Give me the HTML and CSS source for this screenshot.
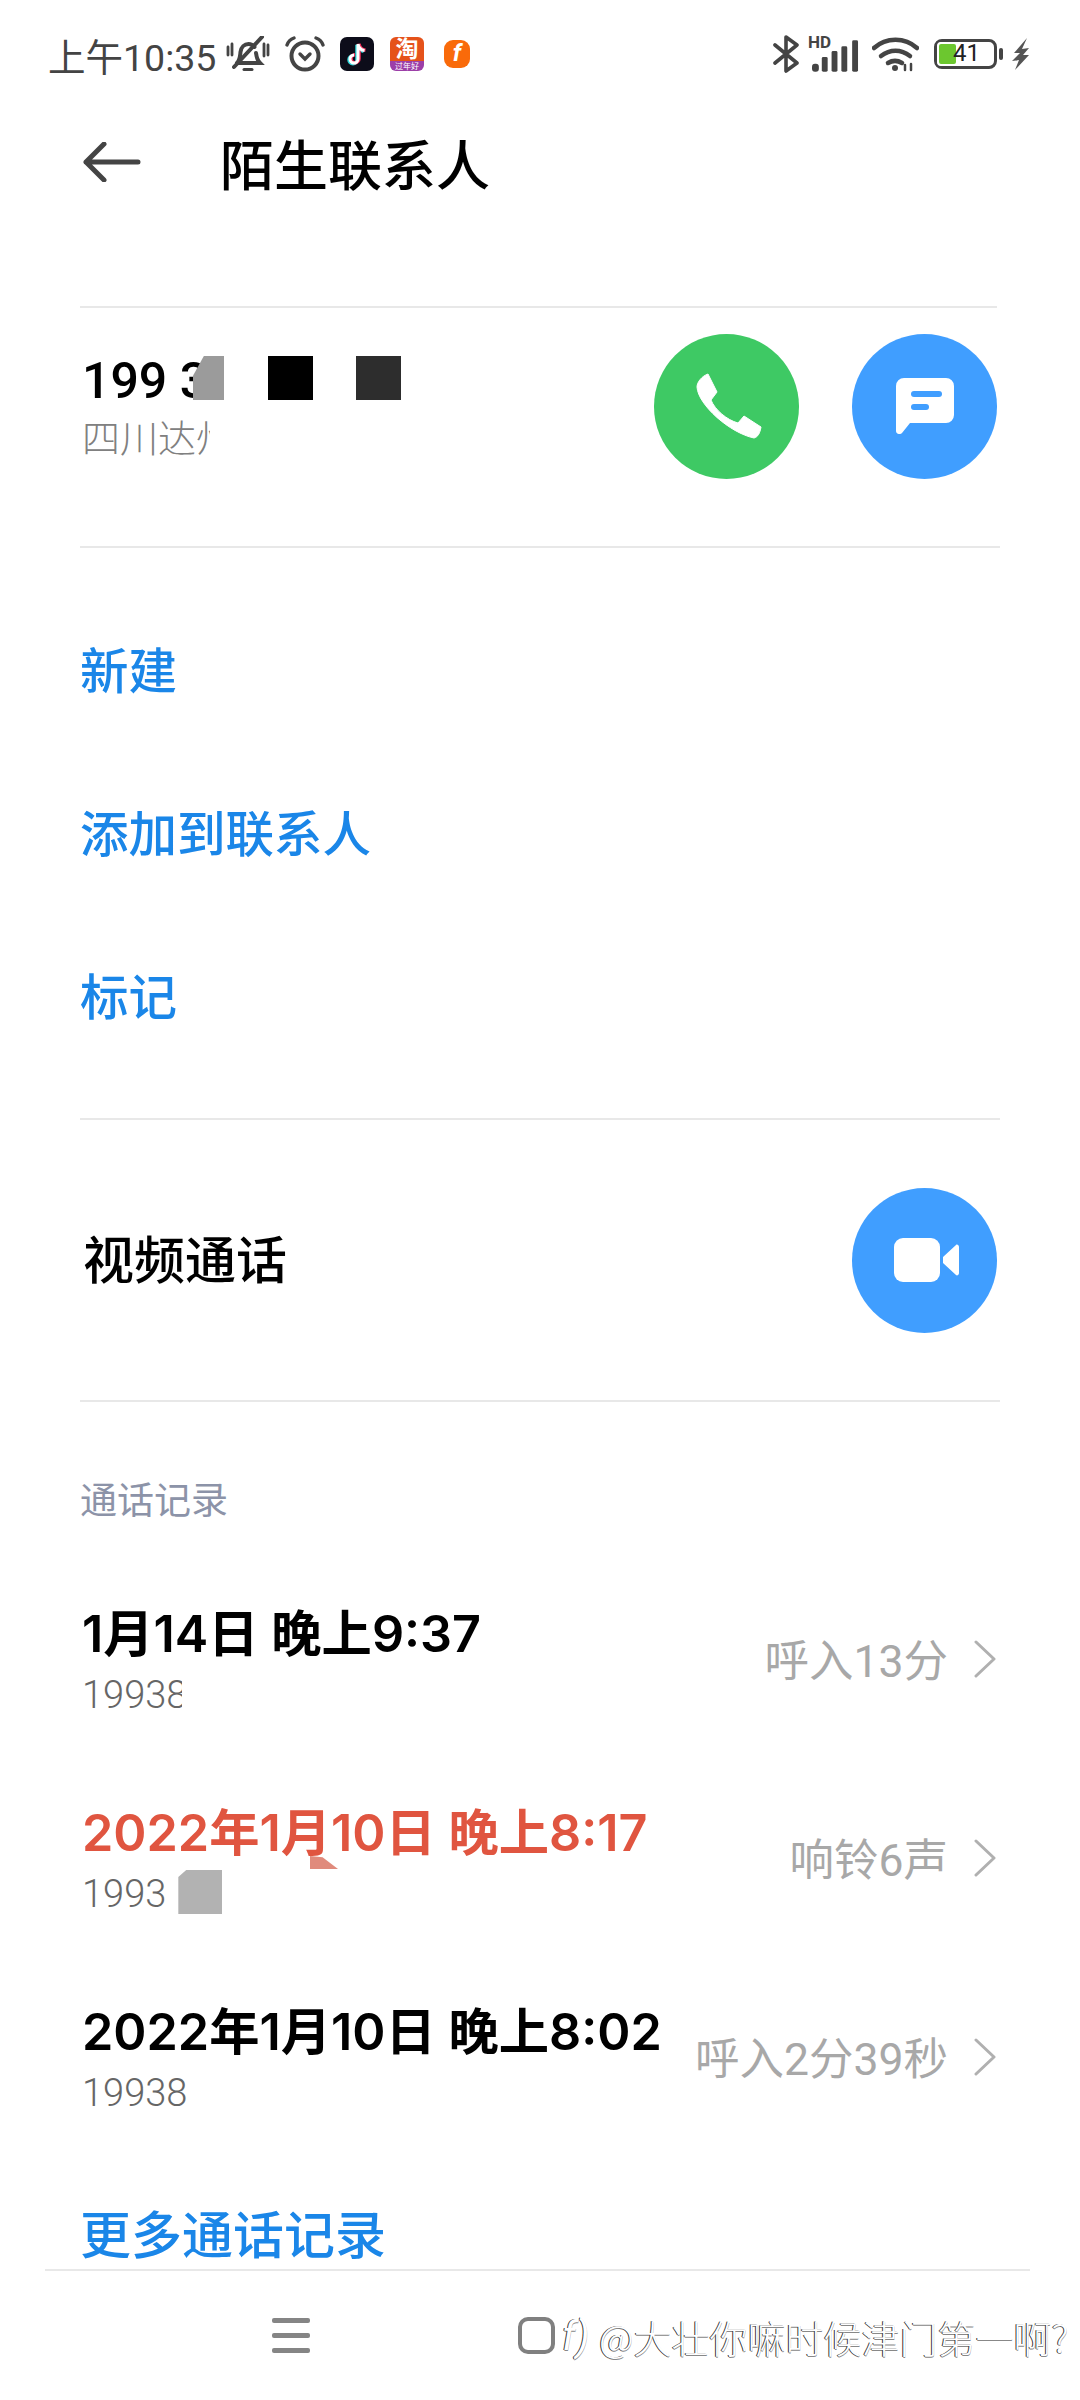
FILE: index.html
```html
<!DOCTYPE html>
<html lang="zh-CN">
<head>
  <meta charset="UTF-8">
  <meta name="viewport" content="width=device-width, initial-scale=1.0">
  <title>陌生联系人</title>
  <link rel="stylesheet" href="styles.css">
</head>
<body>
  <div class="page">
    <div class="status-bar">
      <div class="status-left">
        <span class="status-time">上午10:35</span>
        <svg class="ic-bell" viewBox="0 0 44 36" fill="none" stroke="#444" stroke-width="4" stroke-linecap="round">
          <path d="M11 27c3-3 3-6 3.500-11 .6-5 4-8 8-8 2.500 0 4.500 1 6 3M30 17c.5 4 1 7 4 10H11"/>
          <path d="M36 1 8 31"/>
          <path d="M2 11v8M42 9v10M6 8v11M38 8v12" stroke-width="2.800"/>
          <path d="M18 33.500h8" stroke-width="3"/>
        </svg>
        <svg class="ic-alarm" viewBox="0 0 40 36" fill="none" stroke="#444" stroke-linecap="round">
          <circle cx="20" cy="20" r="13.500" stroke-width="4"/>
          <path d="M15 18l5 5 5-5" stroke-width="3.400"/>
          <path d="M2 9c1-3 4-6 7-7M38 9c-1-3-4-6-7-7" stroke-width="3.400"/>
        </svg>
        <svg class="ic-app" viewBox="0 0 34 34">
          <rect width="34" height="34" rx="7" fill="#0d0d1a"/>
          <path d="M18 7v15a4 4 0 1 1-4-4M18 7c.5 3.500 3 6 6.500 6.500" fill="none" stroke="#2fd6dc" stroke-width="3.500" transform="translate(-1 .8)"/>
          <path d="M18 7v15a4 4 0 1 1-4-4M18 7c.5 3.500 3 6 6.500 6.500" fill="none" stroke="#f3305b" stroke-width="3.500" transform="translate(1 -.2)"/>
          <path d="M18 7v15a4 4 0 1 1-4-4M18 7c.5 3.500 3 6 6.500 6.500" fill="none" stroke="#fff" stroke-width="3"/>
        </svg>
        <div class="ic-taobao"><span class="taobao-main">淘</span><span class="taobao-sub">过年好</span></div>
        <div class="ic-fapp">f</div>
      </div>
      <div class="status-right">
        <svg class="ic-bt" viewBox="0 0 26 38" fill="none" stroke="#444" stroke-width="3.600" stroke-linecap="round" stroke-linejoin="round">
          <path d="M2 10l22 18-11 8V2l11 8L2 28"/>
        </svg>
        <div class="signal">
          <span class="signal-hd">HD</span>
          <svg class="signal-bars" viewBox="0 0 48 32" fill="#444">
            <rect x="0" y="24" width="7" height="8" rx="3"/>
            <rect x="10" y="17" width="6" height="15" rx="1.500"/>
            <rect x="20" y="11" width="6" height="21" rx="1.500"/>
            <rect x="30" y="6" width="6" height="26" rx="1.500"/>
            <rect x="41" y="0" width="6" height="32" rx="1.500"/>
          </svg>
        </div>
        <svg class="ic-wifi" viewBox="0 0 47 36" fill="none" stroke="#444" stroke-width="4.500" stroke-linecap="round">
          <path d="M2 12C14 1 33 1 45 12"/>
          <path d="M9 20c9-7 20-7 29 0"/>
          <path d="M16 27c5-3 9-3 14 0"/>
          <circle cx="23" cy="32" r="3" fill="#444" stroke="none"/>
          <path d="M33 34v-5M39 34v-6" stroke-width="2.500"/>
        </svg>
        <div class="battery">
          <div class="battery-fill"></div>
          <span class="battery-num">41</span>
        </div>
        <div class="battery-nub"></div>
        <svg class="ic-bolt" viewBox="0 0 18 32" fill="#555">
          <path d="M15 0 2 15h6L0 23l7-1-4 10 14-15h-6l6-7-7 1z"/>
        </svg>
      </div>
    </div>

    <div class="header">
      <svg class="back" viewBox="0 0 58 40" fill="none" stroke="#444" stroke-width="5" stroke-linecap="round" stroke-linejoin="round">
        <path d="M55 20H3M21 2 3 20l18 18"/>
      </svg>
      <h1 class="title">陌生联系人</h1>
    </div>

    <section class="contact">
      <div class="contact-info">
        <div class="number">199 3</div>
        <div class="region">四川达州</div>
      </div>
      <div class="contact-actions">
        <div class="circle circle-green">
          <svg class="ic-phone" viewBox="0 0 67 66" fill="#fff">
            <path d="M12 1 21 19 15 27C19 37 31 47 42 50L48 43 65 54C64 60 62 64 58 65 34 60 2 32 1 14 1 9 6 3 12 1Z" stroke="#fff" stroke-width="1" stroke-linejoin="round"/>
          </svg>
        </div>
        <div class="circle circle-blue">
          <svg class="ic-msg" viewBox="0 0 58 56">
            <path d="M8 0h42a8 8 0 0 1 8 8v29a8 8 0 0 1-8 8H14l-8 10c-2 2-6 1-6-2V8a8 8 0 0 1 8-8z" fill="#fff"/>
            <rect x="15" y="13" width="31" height="6" rx="3" fill="#409eff"/>
            <rect x="15" y="26" width="18" height="6" rx="3" fill="#409eff"/>
          </svg>
        </div>
      </div>
      <div class="mask mask-gray"></div>
      <div class="mask mask-black"></div>
      <div class="mask mask-dark"></div>
    </section>

    <section class="actions">
      <div class="action">新建</div>
      <div class="action">添加到联系人</div>
      <div class="action">标记</div>
    </section>

    <section class="video">
      <div class="video-label">视频通话</div>
      <div class="circle circle-blue">
        <svg class="ic-video" viewBox="0 0 65 44" fill="#fff">
          <rect x="0" y="0" width="46" height="44" rx="9"/>
          <path d="M49 19 62 7c1-1 3 0 3 2v26c0 2-2 3-3 2L49 25z"/>
        </svg>
      </div>
    </section>

    <section class="calls">
      <div class="calls-title">通话记录</div>

      <div class="call">
        <div class="call-info">
          <div class="call-date">1月14日 晚上9:37</div>
          <div class="call-num call-num-cut">19938</div>
        </div>
        <div class="call-meta">呼入13分</div>
        <svg class="chevron" viewBox="0 0 22 38" fill="none" stroke="#b0b0b0" stroke-width="3" stroke-linecap="round" stroke-linejoin="round"><path d="M2 2l18 17L2 36"/></svg>
      </div>

      <div class="call call-missed">
        <div class="call-info">
          <div class="call-date">2022年1月10日 晚上8:17</div>
          <div class="call-num">1993<span class="num-block"></span></div>
        </div>
        <div class="call-meta">响铃6声</div>
        <svg class="chevron" viewBox="0 0 22 38" fill="none" stroke="#b0b0b0" stroke-width="3" stroke-linecap="round" stroke-linejoin="round"><path d="M2 2l18 17L2 36"/></svg>
        <div class="pink-chip"></div>
      </div>

      <div class="call">
        <div class="call-info">
          <div class="call-date">2022年1月10日 晚上8:02</div>
          <div class="call-num">19938</div>
        </div>
        <div class="call-meta">呼入2分39秒</div>
        <svg class="chevron" viewBox="0 0 22 38" fill="none" stroke="#b0b0b0" stroke-width="3" stroke-linecap="round" stroke-linejoin="round"><path d="M2 2l18 17L2 36"/></svg>
      </div>

      <div class="more">更多通话记录</div>
    </section>

    <div class="nav">
      <div class="nav-menu"><span></span><span></span><span></span></div>
      <div class="nav-square"></div>
      <div class="watermark"><span class="wm-logo">f)</span><span class="wm-text">@大壮你嘛时候津门第一啊?</span></div>
    </div>
  </div>
</body>
</html>
```

FILE: styles.css
```css
* {
  box-sizing: border-box;
}
body {
  margin: 0;
  background: #fff;
  font-family: Roboto, "Noto Sans CJK SC", sans-serif;
  color: #000;
}
.page {
  position: relative;
  width: 1080px;
  height: 2400px;
  overflow: hidden;
  background: #fff;
}

/* status bar */
.status-bar {
  display: flex;
  justify-content: space-between;
  align-items: center;
  height: 108px;
  padding: 0 50px 0 48px;
}
.status-left,
.status-right {
  display: flex;
  align-items: center;
}
.status-time {
  font-size: 37.500px;
  color: #444;
  width: 178px;
  white-space: nowrap;
}
.ic-bell {
  width: 44px;
  height: 36px;
}
.ic-alarm {
  width: 40px;
  height: 36px;
  margin-left: 15px;
}
.ic-app {
  width: 34px;
  height: 34px;
  margin-left: 15px;
}
.ic-taobao {
  display: flex;
  flex-direction: column;
  align-items: center;
  width: 34px;
  height: 34px;
  margin-left: 16px;
  border-radius: 6px;
  overflow: hidden;
  background: linear-gradient(#e5521a 72%, #9c3fa8 72%);
  color: #fff;
}
.taobao-main {
  font-size: 23px;
  line-height: 25px;
  font-weight: 700;
}
.taobao-sub {
  font-size: 8px;
  line-height: 9px;
  white-space: nowrap;
}
.ic-fapp {
  width: 26px;
  height: 28px;
  margin-left: 20px;
  border-radius: 9px;
  background: #f96a0a;
  color: #fff;
  font-size: 24px;
  font-weight: 700;
  line-height: 27px;
  text-align: center;
  font-style: italic;
}
.ic-bt {
  width: 26px;
  height: 38px;
}
.signal {
  position: relative;
  width: 50px;
  height: 36px;
  margin-left: 10px;
}
.signal-hd {
  position: absolute;
  left: -1px;
  top: -2px;
  font-size: 17px;
  line-height: 17px;
  font-weight: 700;
  color: #444;
}
.signal-bars {
  position: absolute;
  left: 3px;
  top: 4px;
  width: 47px;
  height: 32px;
}
.ic-wifi {
  width: 47px;
  height: 36px;
  margin-left: 13px;
}
.battery {
  position: relative;
  width: 63px;
  height: 30px;
  margin-left: 15px;
  border: 3.500px solid #444;
  border-radius: 8px;
}
.battery-fill {
  width: 21px;
  height: 100%;
  margin: 0;
  border: 2px solid #fff;
  background: #6cc72f;
  border-radius: 4px;
}
.battery-num {
  position: absolute;
  left: 16px;
  top: -2px;
  font-size: 24px;
  line-height: 27px;
  color: #222;
}
.battery-nub {
  width: 4px;
  height: 12px;
  margin-left: 2px;
  border-radius: 2px;
  background: #444;
}
.ic-bolt {
  width: 18px;
  height: 32px;
  margin-left: 9px;
}

/* header */
.header {
  display: flex;
  align-items: center;
  height: 108px;
  padding-left: 83px;
}
.back {
  width: 58px;
  height: 40px;
}
.title {
  margin: 0 0 0 79px;
  font-size: 54px;
  font-weight: 500;
}

/* contact */
.contact {
  display: flex;
  justify-content: space-between;
  align-items: center;
  height: 240px;
  margin: 90px 83px 0 80px;
  padding: 26px 0 68px;
  border-top: 2px solid #e8e8e8;
}
.contact-info {
  padding: 2px 0 0 2px;
}
.number {
  font-size: 50px;
  line-height: 60px;
  font-weight: 500;
}
.region {
  width: 128px;
  margin-top: 3px;
  overflow: hidden;
  white-space: nowrap;
  font-size: 38px;
  font-weight: 300;
  line-height: 50px;
  color: #808080;
}
.contact-actions {
  display: flex;
  gap: 53px;
}
.circle {
  display: flex;
  align-items: center;
  justify-content: center;
  width: 145px;
  height: 145px;
  border-radius: 50%;
}
.circle-green {
  background: #3ec964;
}
.circle-blue {
  background: #409eff;
}
.ic-phone {
  width: 67px;
  height: 66px;
  margin-left: 6px;
}
.ic-msg {
  width: 58px;
  height: 56px;
}
.ic-video {
  width: 65px;
  height: 44px;
  margin-left: 4px;
}
.mask {
  position: absolute;
  top: 356px;
  height: 44px;
}
.mask-gray {
  left: 193px;
  width: 31px;
  background: #9b9b9b;
  clip-path: polygon(35% 0, 100% 0, 100% 100%, 0 100%, 0 45%);
}
.mask-black {
  left: 268px;
  width: 45px;
  background: #000;
}
.mask-dark {
  left: 356px;
  width: 45px;
  background: #2d2d2d;
}

/* actions */
.actions {
  margin: 0 80px;
  padding: 38px 0 43px;
  border-top: 2px solid #e8e8e8;
}
.action {
  display: flex;
  align-items: center;
  height: 163px;
  font-size: 48.500px;
  font-weight: 500;
  color: #1a86e8;
}

/* video row */
.video {
  display: flex;
  justify-content: space-between;
  align-items: center;
  height: 282px;
  margin: 0 80px;
  padding-right: 3px;
  border-top: 2px solid #e8e8e8;
}
.video-label {
  padding: 0 0 6px 3px;
  font-size: 51px;
  font-weight: 500;
}

/* call log */
.calls {
  position: relative;
  margin: 0 80px;
  padding-top: 78px;
  border-top: 2px solid #e8e8e8;
}
.calls-title {
  margin-bottom: 80px;
  font-size: 37px;
  line-height: 44px;
  color: #8c93a8;
}
.call {
  display: flex;
  align-items: center;
  height: 199px;
  padding: 0 4px 84px 2px;
}
.call-info {
  flex: 1;
}
.call-date {
  font-family: Inter, "Noto Sans CJK SC", sans-serif;
  font-size: 50.300px;
  line-height: 60px;
  font-weight: 600;
  white-space: nowrap;
}
.call-missed .call-date {
  color: #e05540;
}
.call-num {
  display: flex;
  margin-top: 7px;
  font-size: 38px;
  font-weight: 300;
  line-height: 48px;
  color: #666;
}
.call-num-cut {
  width: 100px;
  overflow: hidden;
}
.num-block {
  width: 44px;
  height: 44px;
  margin-left: 12px;
  background: #b2b2b2;
  clip-path: polygon(18% 0, 100% 0, 100% 100%, 0 100%, 0 16%);
}
.call-meta {
  margin-bottom: 8px;
  font-size: 44.500px;
  color: #a8a8a8;
  white-space: nowrap;
}
.chevron {
  width: 22px;
  height: 38px;
  margin: 0 0 6px 26px;
}
.pink-chip {
  position: absolute;
  left: 230px;
  top: 454px;
  width: 28px;
  height: 13px;
  background: #e08a7c;
  clip-path: polygon(0 0, 45% 10%, 100% 100%, 0 100%);
}
.more {
  margin-top: 6px;
  font-size: 51px;
  line-height: 60px;
  font-weight: 500;
  color: #1a86e8;
}

/* bottom nav */
.nav {
  position: relative;
  height: 131px;
  margin: 2px 50px 0 45px;
  border-top: 2px solid #e8e8e8;
}
.nav-menu {
  position: absolute;
  left: 227px;
  top: 47px;
  display: flex;
  flex-direction: column;
  justify-content: space-between;
  width: 38px;
  height: 35px;
}
.nav-menu span {
  height: 5px;
  border-radius: 2px;
  background: #858585;
}
.nav-square {
  position: absolute;
  left: 473px;
  top: 46px;
  width: 37px;
  height: 37px;
  border: 4px solid #808080;
  border-radius: 10px;
}
.watermark {
  position: absolute;
  left: 517px;
  top: 40px;
  display: flex;
  align-items: center;
  height: 50px;
  white-space: nowrap;
  color: #fff;
  text-shadow: -1px 0 #333, 0 1px #888;
}
.wm-logo {
  width: 37px;
  font-size: 40px;
  font-style: italic;
}
.wm-text {
  font-size: 38px;
  font-family: "Noto Sans CJK SC", sans-serif;
  font-weight: 300;
}
```
